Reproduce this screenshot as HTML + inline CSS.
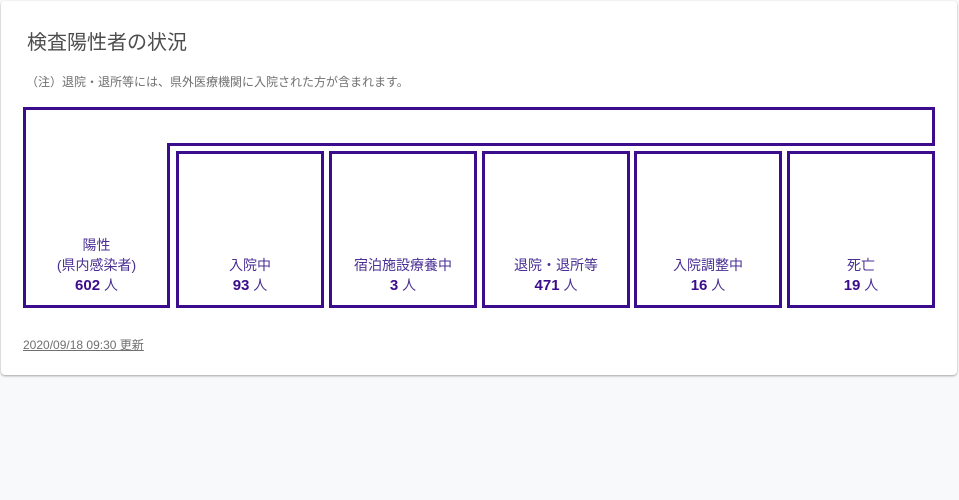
<!DOCTYPE html>
<html><head><meta charset="utf-8"><style>
body{margin:0;width:959px;height:500px;background:#f8f9fa;font-family:"Liberation Sans","Noto Sans CJK JP",sans-serif;position:relative;overflow:hidden}
.card{position:absolute;left:1px;top:1px;width:956px;height:374px;background:#fff;border-radius:4px;box-shadow:0 1px 2px rgba(0,0,0,.35)}
.t{position:absolute;left:27px;top:26px;font-size:20px;color:#4d4d4d}
.n{position:absolute;left:26px;top:73px;font-size:12px;color:#707070}
.d{position:absolute;left:23px;top:336px;font-size:12px;color:#707070;text-decoration:underline}
.l{position:absolute;background:#3b0d8c}
.b{position:absolute;top:151px;width:142px;height:151px;border:3px solid #3b0d8c}
.lab{position:absolute;left:0;right:0;bottom:9px;text-align:center;color:#4a2f94;font-size:14px;line-height:20px}
.lab b{font-size:15px;color:#3b0d8c}
</style></head><body>
<div class="card"></div>
<div class="t">検査陽性者の状況</div>
<div class="n">（注）退院・退所等には、県外医療機関に入院された方が含まれます。</div>
<div class="l" style="left:23px;top:107px;width:912px;height:3px"></div>
<div class="l" style="left:23px;top:107px;width:3px;height:201px"></div>
<div class="l" style="left:932px;top:107px;width:3px;height:39px"></div>
<div class="l" style="left:167px;top:143px;width:768px;height:3px"></div>
<div class="l" style="left:167px;top:143px;width:3px;height:165px"></div>
<div class="l" style="left:23px;top:305px;width:147px;height:3px"></div>
<div style="position:absolute;left:26px;top:110px;width:141px;height:195px"><div class="lab">陽性<br>(県内感染者)<br><b>602</b> 人</div></div>
<div class="b" style="left:176px"><div class="lab">入院中<br><b>93</b> 人</div></div>
<div class="b" style="left:329px"><div class="lab">宿泊施設療養中<br><b>3</b> 人</div></div>
<div class="b" style="left:482px"><div class="lab">退院・退所等<br><b>471</b> 人</div></div>
<div class="b" style="left:634px"><div class="lab">入院調整中<br><b>16</b> 人</div></div>
<div class="b" style="left:787px"><div class="lab">死亡<br><b>19</b> 人</div></div>
<div class="d">2020/09/18 09:30 更新</div>
</body></html>
